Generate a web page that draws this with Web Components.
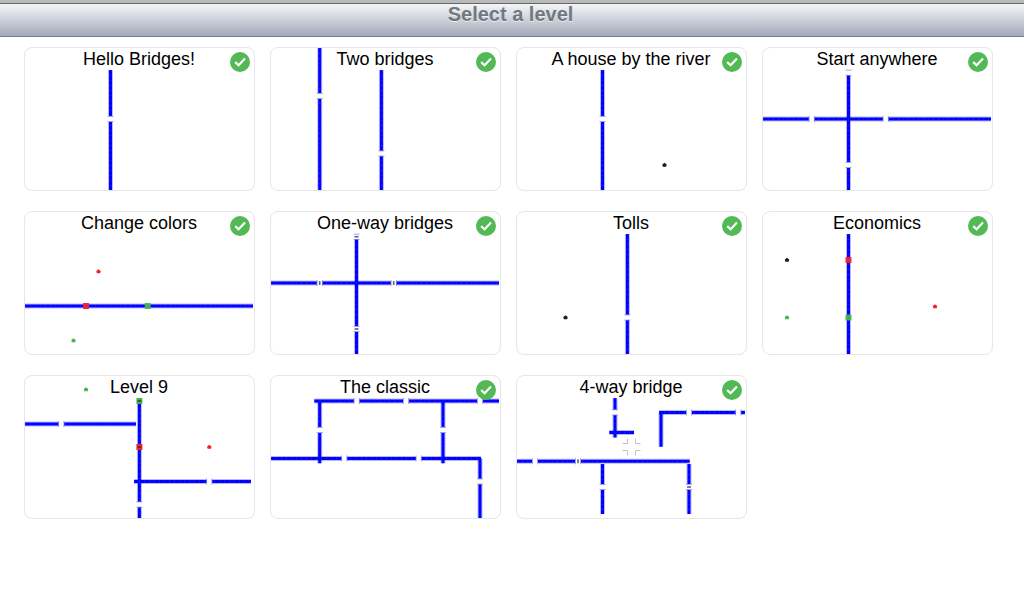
<!DOCTYPE html>
<html lang="en">
<head>
<meta charset="utf-8">
<meta name="viewport" content="width=device-width, initial-scale=1">
<title>Select a level</title>
<style>
  body { margin: 0; background: #fff; font-family: "Liberation Sans", Arial, sans-serif; }
</style>
</head>
<body>
<level-screen>
  <title-bar slot="bar">Select a level</title-bar>
  <level-card done map="V 85.5 22 142; g 85.5 71">Hello Bridges!</level-card>
  <level-card done map="V 48.7 0 142; g 48.7 48; V 110.4 22 142; g 110.4 105.5">Two bridges</level-card>
  <level-card done map="V 85.5 22 142; g 85.5 71; h 147.5 117 black">A house by the river</level-card>
  <level-card done map="V 85.5 22 142; g 85.5 24.7; g 85.5 117; H 71 0 228; G 48.7 71; G 122.7 71">Start anywhere</level-card>
  <level-card done map="H 94 0 228; s 61 94 red; s 122.7 94 green; h 73.5 59.5 red; h 48.5 128.5 green">Change colors</level-card>
  <level-card done map="V 85.5 22 142; g 85.5 24.7 1; g 85.5 117 1; H 71 0 228; G 48.7 71 1; G 122.7 71 1">One-way bridges</level-card>
  <level-card done map="V 110.4 22 142; g 110.4 105.5; h 48.5 105.5 black">Tolls</level-card>
  <level-card done map="V 85.5 22 142; s 85.5 48 red; s 85.5 105.5 green; h 24 48 black; h 24 105.5 green; h 172 94.5 red">Economics</level-card>
  <level-card map="V 114.4 22 142; s 114.4 25 green 1; s 114.4 71 red 1; g 114.4 128.5; H 48 0 111; G 36.3 48; H 105.5 109 226; G 184.3 105.5; h 61 13.5 green; h 184.3 71 red">Level 9</level-card>
  <level-card done map="H 25 43.3 228; G 85.7 25; G 135 25; G 209 25; V 48.7 25 87.3; g 48.7 54; V 172 25 87.3; g 172 54; H 82.4 0 210; G 73.3 82.4; G 147.7 82.4; V 209 82.4 142; g 209 105.5">The classic</level-card>
  <level-card done map="V 98 22 61.5; g 98 36.4; H 56.4 92.3 117; H 36.4 142 228; G 172 36.4; G 221.3 36.4; V 144 36.4 70.7; x 114.5 71; H 85.3 0 172.7; G 18 85.3; G 61 85.3 1; V 85.5 88 138; g 85.5 111; V 172 88 138; g 172 111 1">4-way bridge</level-card>
</level-screen>

<script>
customElements.define('level-screen', class extends HTMLElement {
  constructor() {
    super();
    this.attachShadow({ mode: 'open' }).innerHTML = `
      <style>
        :host { display: block; }
        main {
          display: grid;
          grid-template-columns: repeat(auto-fill, 231px);
          gap: 20px 15px;
          padding: 10px 24px;
        }
      </style>
      <slot name="bar"></slot>
      <main><slot></slot></main>`;
  }
});

customElements.define('title-bar', class extends HTMLElement {
  constructor() {
    super();
    this.attachShadow({ mode: 'open' }).innerHTML = `
      <style>
        :host { display: block; border-top: 3px solid #b9b9b9; }
        header {
          border-top: 1px solid #66676a;
          border-bottom: 1px solid #717991;
          padding-bottom: 12px;
          background: linear-gradient(#f4f5f7, #cdd0d9 50%, #a5a9b8);
        }
        h1 {
          margin: 0;
          padding-right: 3px;
          font-size: 20px;
          line-height: 20px;
          text-align: center;
          color: #717880;
          text-shadow: 0 1px 0 rgba(255, 255, 255, .6);
        }
      </style>
      <header><h1><slot></slot></h1></header>`;
  }
});

customElements.define('done-badge', class extends HTMLElement {
  constructor() {
    super();
    this.attachShadow({ mode: 'open' }).innerHTML = `
      <style>
        :host { display: block; width: 20px; height: 20px; }
        svg { display: block; }
      </style>
      <svg width="20" height="20" viewBox="0 0 20 20" role="img" aria-label="Completed">
        <circle cx="10" cy="10" r="10" fill="#53b955"/>
        <path d="M5.2 10.1 8.6 13.2 15 6.6" fill="none" stroke="#fff" stroke-width="2.2"/>
      </svg>`;
  }
});

// Draws a level from a short list of commands:
// V/H river, g/G bridge over a V/H river, s gate, h house, x four-way bridge.
customElements.define('river-map', class extends HTMLElement {
  connectedCallback() {
    const colors = { red: '#f0232c', green: '#45b549', black: '#1d1d1d' };
    const rect = (x, y, w, h, fill, extra = '') =>
      `<rect x="${x}" y="${y}" width="${w}" height="${h}" fill="${fill}" ${extra}/>`;
    const river = (x1, y1, x2, y2) => {
      const d = `M${x1} ${y1}L${x2} ${y2}`;
      return `<path d="${d}" stroke="#00f" stroke-opacity=".28" stroke-width="5"/>
        <path d="${d}" stroke="#00f" stroke-width="3"/>
        <path d="${d}" stroke="#4a4aff" stroke-opacity=".25" stroke-width="3" stroke-dasharray="1 4"/>`;
    };
    const draw = {
      V: (x, a, b) => river(x, a, x, b),
      H: (y, a, b) => river(a, y, b, y),
      g: (x, y, mark) => rect(x - 3, y - 3, 6, 6, '#8c8ce0') + rect(x - 4, y - 2.2, 8, 4.4, '#fff') +
        (mark ? rect(x - 2, y - .8, 4, 1.6, '#666') : ''),
      G: (x, y, mark) => rect(x - 3, y - 3, 6, 6, '#8c8ce0') + rect(x - 2.2, y - 4, 4.4, 8, '#fff') +
        (mark ? rect(x - .8, y - 2, 1.6, 4, '#666') : ''),
      s: (x, y, c, mark) => rect(x - 3, y - 3, 6, 6, colors[c], 'opacity=".95"') +
        (mark ? rect(x - 2, y - 1, 4, 2, '#222', 'opacity=".5"') : ''),
      h: (x, y, c) => `<path d="M${x - 2.2} ${y - .5}L${x} ${y - 2.2}L${x + 2.2} ${y - .5}L${x + 1.7} ${y + 1.8}H${x - 1.7}Z" fill="${colors[c]}"/>`,
      x: (x, y) => [[-1, -1], [1, -1], [-1, 1], [1, 1]].map(([i, j]) =>
        `<path d="M${x + i * 4} ${y + j * 8.5}V${y + j * 3.5}H${x + i * 9}" stroke="#c4c4c4" fill="none"/>`).join('')
    };
    const body = this.getAttribute('map').split(';').map(s => {
      const [cmd, ...args] = s.trim().split(' ');
      return draw[cmd](...args.map(v => isNaN(v) ? v : Number(v)));
    }).join('');
    this.attachShadow({ mode: 'open' }).innerHTML = `
      <style>:host, svg { display: block; }</style>
      <svg width="229" height="142" viewBox="0 0 229 142" aria-hidden="true">${body}</svg>`;
  }
});

customElements.define('level-card', class extends HTMLElement {
  connectedCallback() {
    this.attachShadow({ mode: 'open' }).innerHTML = `
      <style>
        :host { display: block; }
        a {
          display: grid;
          border: 1px solid #e6e6e6;
          border-radius: 8px;
          overflow: hidden;
          color: #000;
          text-decoration: none;
        }
        a > * { grid-area: 1 / 1; }
        span { padding-right: 1px; font-size: 18px; line-height: 22px; text-align: center; z-index: 1; }
        done-badge { justify-self: end; margin: 4px; z-index: 2; }
      </style>
      <a href="#play">
        <river-map map="${this.getAttribute('map')}"></river-map>
        <span><slot></slot></span>
        ${this.hasAttribute('done') ? '<done-badge></done-badge>' : ''}
      </a>`;
  }
});
</script>
</body>
</html>
